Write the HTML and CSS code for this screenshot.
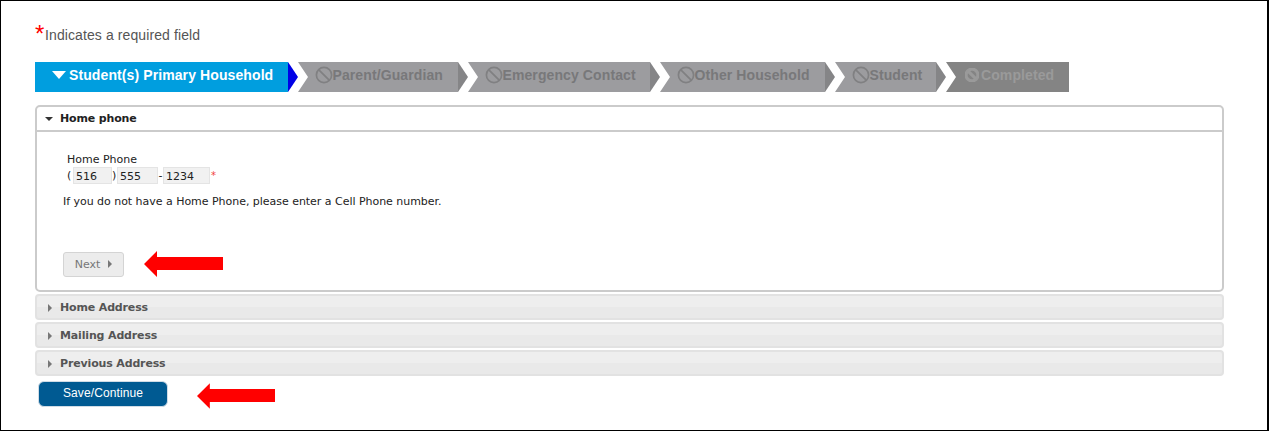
FILE: index.html
```html
<!DOCTYPE html>
<html lang="en">
<head>
    <meta charset="UTF-8">
    <title>Student Registration</title>
    <link rel="stylesheet" href="styles.css">
</head>
<body>
    <div class="frame">
        <div class="required-note"><span class="required-star">*</span>Indicates a required field</div>

        <div class="wizard">
            <div class="step step-active step-primary">
                <div class="step-body"><span class="caret-down"></span>Student(s) Primary Household</div>
                <span class="step-arrow"></span>
            </div>
            <div class="step step-parent">
                <div class="step-body"><svg class="ban-icon" viewBox="0 0 18 18"><circle cx="9" cy="9" r="7.6"/><path d="M3.6 3.6 14.4 14.4"/></svg>Parent/Guardian</div>
                <span class="step-arrow"></span>
            </div>
            <div class="step step-emergency">
                <div class="step-body"><svg class="ban-icon" viewBox="0 0 18 18"><circle cx="9" cy="9" r="7.6"/><path d="M3.6 3.6 14.4 14.4"/></svg>Emergency Contact</div>
                <span class="step-arrow"></span>
            </div>
            <div class="step step-other">
                <div class="step-body"><svg class="ban-icon" viewBox="0 0 18 18"><circle cx="9" cy="9" r="7.6"/><path d="M3.6 3.6 14.4 14.4"/></svg>Other Household</div>
                <span class="step-arrow"></span>
            </div>
            <div class="step step-student">
                <div class="step-body"><svg class="ban-icon" viewBox="0 0 18 18"><circle cx="9" cy="9" r="7.6"/><path d="M3.6 3.6 14.4 14.4"/></svg>Student</div>
                <span class="step-arrow"></span>
            </div>
            <div class="step step-completed">
                <div class="step-body"><svg class="ban-icon ban-small" viewBox="0 0 18 18"><circle cx="9" cy="9" r="7.6"/><path d="M3.6 3.6 14.4 14.4"/></svg>Completed</div>
            </div>
        </div>

        <div class="panel">
            <div class="panel-header"><span class="tri-down"></span>Home phone</div>
            <div class="panel-content">
                <div class="phone-label">Home Phone</div>
                <div class="phone-row">
                    <span class="paren-open">(</span>
                    <input class="phone-input area" type="text" value="516" readonly>
                    <span class="paren-close">)</span>
                    <input class="phone-input prefix" type="text" value="555" readonly>
                    <span class="dash">-</span>
                    <input class="phone-input line" type="text" value="1234" readonly>
                    <span class="field-star">*</span>
                </div>
                <p class="phone-help">If you do not have a Home Phone, please enter a Cell Phone number.</p>
                <div class="action-row next-row">
                    <button class="next-button" type="button">Next<span class="tri-right"></span></button>
                    <svg class="red-arrow" viewBox="0 0 79 26"><path d="M0 13 13 0V6H79V19H13V26Z"/></svg>
                </div>
            </div>
        </div>

        <div class="collapsed"><span class="tri-right"></span>Home Address</div>
        <div class="collapsed"><span class="tri-right"></span>Mailing Address</div>
        <div class="collapsed"><span class="tri-right"></span>Previous Address</div>

        <div class="action-row save-row">
            <button class="save-button" type="button">Save/Continue</button>
            <svg class="red-arrow" viewBox="0 0 79 26"><path d="M0 13 13 0V6H79V19H13V26Z"/></svg>
        </div>
    </div>
</body>
</html>
```

FILE: styles.css
```css
* {
    box-sizing: border-box;
}

body {
    margin: 0;
    background: white;
}

.frame {
    width: 1269px;
    height: 431px;
    padding: 22px 43px 0 34px;
    border: 1px solid #000;
    border-right-width: 2px;
    overflow: hidden;
    font-family: "DejaVu Sans", Verdana, sans-serif;
}

.required-note {
    display: flex;
    align-items: center;
    height: 24px;
    font-family: "Liberation Sans", Arial, sans-serif;
    font-size: 14px;
    letter-spacing: 0.1px;
    color: #555;
}

.required-star {
    align-self: flex-start;
    width: 10px;
    margin-top: 1px;
    font-size: 24px;
    line-height: 20px;
    color: #f00;
}

/* wizard steps */
.wizard {
    display: flex;
    height: 30px;
    margin-top: 15px;
    font-family: "Liberation Sans", Arial, sans-serif;
    font-size: 14px;
    font-weight: bold;
    letter-spacing: 0.1px;
}

.step {
    display: flex;
    height: 100%;
}

.step-body {
    display: flex;
    align-items: center;
    flex: 1;
    background: #9c9c9f;
    color: #78787a;
    padding: 0 0 4px 16.5px;
    clip-path: polygon(0 0, 100% 0, 100% 100%, 0 100%, 10px 50%);
}

.step-arrow {
    width: 10px;
    height: 100%;
    background: #858587;
    clip-path: polygon(0 0, 100% 50%, 0 100%);
}

.step-primary { width: 263px; }
.step-parent { width: 170px; }
.step-emergency { width: 192px; }
.step-other { width: 175px; }
.step-student { width: 111px; }
.step-completed { width: 123px; }

.step-active .step-body {
    background: #009edf;
    color: white;
    clip-path: none;
    padding-left: 17px;
}

.step-active .step-arrow {
    background: #0000e6;
}

.step-completed .step-body {
    background: #848484;
    color: #9a9a9a;
    padding-left: 19px;
}

.caret-down {
    width: 0;
    height: 0;
    margin-right: 3px;
    border-left: 7px solid transparent;
    border-right: 7px solid transparent;
    border-top: 8px solid white;
}

.ban-icon {
    width: 18px;
    height: 18px;
    fill: none;
    stroke: #808082;
    stroke-width: 1.7;
}

.ban-small {
    stroke: #9a9a9a;
    stroke-width: 4;
    width: 14px;
    height: 14px;
    margin-right: 2px;
}

/* accordion */
.panel {
    height: 187px;
    margin-top: 13px;
    border: 2px solid #cbcbcb;
    border-radius: 5px;
    background: white;
}

.panel-header {
    display: flex;
    align-items: center;
    height: 25px;
    padding-left: 8px;
    border-bottom: 2px solid #cbcbcb;
    font-size: 11px;
    font-weight: bold;
    letter-spacing: -0.15px;
    color: #222;
}

.tri-down {
    width: 0;
    height: 0;
    margin-right: 7px;
    border-left: 4px solid transparent;
    border-right: 4px solid transparent;
    border-top: 4px solid #333;
}

.tri-right {
    width: 0;
    height: 0;
    border-top: 4px solid transparent;
    border-bottom: 4px solid transparent;
    border-left: 4px solid #777;
}

.panel-content {
    padding: 21px 0 0 26px;
    font-size: 11px;
    color: #222;
}

.phone-label {
    padding-left: 4px;
    line-height: 14px;
}

.phone-row {
    display: flex;
    align-items: center;
    height: 17px;
    padding-left: 4px;
}

.paren-open { width: 6px; }
.paren-close { width: 5px; }
.dash { width: 5px; text-align: center; }

.phone-input {
    height: 17px;
    padding: 1px 2px 0 2px;
    border: 1px solid #e4e4e4;
    border-radius: 0;
    background: #f1f1f1;
    font-family: "DejaVu Sans", Verdana, sans-serif;
    font-size: 11px;
    color: #222;
    outline: none;
}

.area { width: 39px; }
.prefix { width: 41px; }
.line { width: 47px; }

.field-star {
    margin-left: 1px;
    color: #f04040;
    font-size: 10px;
}

.phone-help {
    margin: 11px 0 0 0;
    line-height: 14px;
    letter-spacing: -0.03px;
}

.action-row {
    display: flex;
    align-items: center;
}

.next-row {
    gap: 20px;
    margin-top: 42px;
}

.next-button {
    display: flex;
    align-items: center;
    justify-content: center;
    gap: 8px;
    width: 61px;
    height: 25px;
    padding: 0;
    border: 1px solid #d4d4d4;
    border-radius: 3px;
    background: #ececec;
    font-family: "DejaVu Sans", Verdana, sans-serif;
    font-size: 11px;
    color: #777;
}

.red-arrow {
    width: 79px;
    height: 26px;
    fill: #f00;
}

.collapsed {
    display: flex;
    align-items: center;
    gap: 8px;
    height: 26px;
    margin-top: 2px;
    padding: 1px 0 0 11px;
    border: 2px solid #e2e2e2;
    border-radius: 4px;
    background: linear-gradient(#eeeeee 50%, #e9e9e9 50%);
    font-size: 11px;
    font-weight: bold;
    letter-spacing: -0.15px;
    color: #555;
}

.save-row {
    align-items: flex-start;
    gap: 29px;
    margin-top: 5px;
    padding-left: 3px;
}

.save-row .red-arrow {
    width: 78px;
    margin-top: 2px;
}

.save-button {
    width: 130px;
    height: 26px;
    padding: 0 0 3px 0;
    border: 1px solid #d0dce6;
    border-radius: 6px;
    background: #005a92;
    font-family: "Liberation Sans", Arial, sans-serif;
    font-size: 12px;
    letter-spacing: 0.1px;
    color: white;
}
```
